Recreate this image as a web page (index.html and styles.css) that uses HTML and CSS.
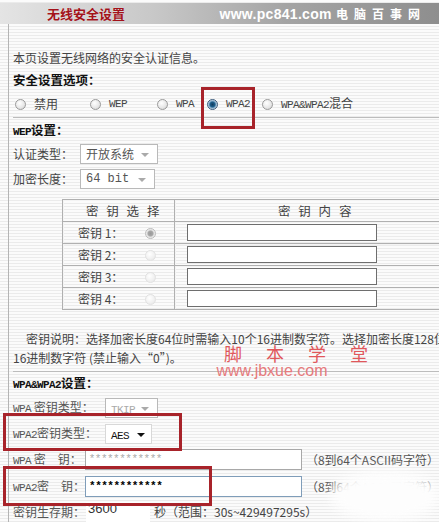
FILE: index.html
```html
<!DOCTYPE html>
<html lang="zh-CN">
<head>
<meta charset="utf-8">
<title>无线安全设置</title>
<link rel="stylesheet" href="styles.css">
</head>
<body>
<div class="page">
  <div class="header">
    <span class="title">无线安全设置</span>
    <span class="site">www.pc841.com <span class="cn">电脑百事网</span></span>
  </div>
  <div class="main">
    <div class="row intro">本页设置无线网络的安全认证信息。</div>
    <div class="row bold opt-title">安全设置选项：</div>
    <div class="row radios">
      <span class="opt w1"><i class="radio"></i><span class="lbl">禁用</span></span>
      <span class="opt w2"><i class="radio"></i><span class="lbl lat">WEP</span></span>
      <span class="opt w3"><i class="radio"></i><span class="lbl lat">WPA</span></span>
      <span class="opt w4"><i class="radio on"></i><span class="lbl lat">WPA2</span></span>
      <span class="opt"><i class="radio"></i><span class="lbl"><span class="lat">WPA&amp;WPA2</span>混合</span></span>
    </div>
    <div class="sep"></div>
    <div class="row bold sec"><span class="lat">WEP</span>设置：</div>
    <div class="row field f1"><span class="flabel">认证类型：</span><span class="select s1">开放系统<i class="arrow"></i></span></div>
    <div class="row field f2"><span class="flabel">加密长度：</span><span class="select s2">64 bit<i class="arrow"></i></span></div>
    <table class="keys">
      <colgroup><col class="k1"><col class="k2"></colgroup>
      <tr class="khead"><td class="c1">密 钥 选 择</td><td class="c2">密 钥 内 容</td></tr>
      <tr><td class="c1"><span class="kl">密钥 1：</span><i class="radio dis sel"></i></td><td class="c2"><span class="kinput"></span></td></tr>
      <tr><td class="c1"><span class="kl">密钥 2：</span><i class="radio dis"></i></td><td class="c2"><span class="kinput"></span></td></tr>
      <tr><td class="c1"><span class="kl">密钥 3：</span><i class="radio dis"></i></td><td class="c2"><span class="kinput"></span></td></tr>
      <tr><td class="c1"><span class="kl">密钥 4：</span><i class="radio dis"></i></td><td class="c2"><span class="kinput"></span></td></tr>
    </table>
    <div class="desc">
      <div class="d1">密钥说明：选择加密长度64位时需输入10个16进制数字符。选择加密长度128位时需输入26个</div>
      <div class="d2">16进制数字符 (禁止输入“0”)。</div>
    </div>
    <div class="sep sep2"></div>
    <div class="row bold sec2"><span class="lat">WPA&amp;WPA2</span>设置：</div>
    <div class="row wf r1"><span class="wl"><span class="lat">WPA</span> 密钥类型：</span><span class="select s3 dim"><span class="lat">TKIP</span><i class="arrow"></i></span></div>
    <div class="row wf r2"><span class="wl"><span class="lat">WPA2</span>密钥类型：</span><span class="select s4"><span class="lat">AES</span><i class="arrow dark"></i></span></div>
    <div class="row wf r3"><span class="wl2"><span class="lat">WPA</span> 密　钥：</span><span class="pw dim">************</span><span class="hint">（8到64个ASCII码字符）</span></div>
    <div class="row wf r4"><span class="wl2"><span class="lat">WPA2</span>密　钥：</span><span class="pw act">************</span><span class="hint">（8到64个ASCII码字符）</span></div>
    <div class="row wf r5"><span class="wl2">密钥生存期：</span><span class="life">3600</span><span class="unit">秒（范围：30s~429497295s）</span></div>
  </div>
  <div class="mark box1"></div>
  <div class="mark box2"></div>
  <div class="mark box3"></div>
  <div class="watermark"><div class="wm1">脚 本 学 堂</div><div class="wm2">www.jbxue.com</div></div>
  <div class="blob"></div>
</div>
</body>
</html>
```
FILE: styles.css
```css
html, body {
  margin: 0;
  padding: 0;
  overflow: hidden;
}
body {
  width: 439px;
  height: 522px;
  font-family: "Noto Sans CJK SC", "Liberation Sans", sans-serif;
  font-size: 12px;
  color: #333;
  background: repeating-linear-gradient(to bottom, #fbfbfb 0, #fbfbfb 2px, #ebebeb 2px, #ebebeb 3px);
}
.page {
  position: relative;
  width: 439px;
  height: 522px;
  overflow: hidden;
}
.lat {
  font-family: "Liberation Mono", "DejaVu Sans Mono", monospace;
  font-size: 11px;
  letter-spacing: -0.6px;
}
.header {
  margin-top: 3px;
  height: 21px;
  background: linear-gradient(to right, #e4e4e4 0%, #c8c8c8 35%, #a4a4a4 65%, #8e8e8e 100%);
  display: flex;
  align-items: center;
  white-space: nowrap;
}
.title {
  margin-left: 47px;
  font-size: 13px;
  font-weight: bold;
  color: #a3121a;
  text-shadow: 0 0 1px rgba(255,255,255,0.6);
}
.site {
  margin-left: auto;
  margin-right: 19px;
  color: #fff;
  font-family: "Liberation Sans", "DejaVu Sans", sans-serif;
  font-weight: bold;
  font-size: 14px;
  letter-spacing: 0.3px;
  white-space: nowrap;
}
.site .cn {
  font-family: "Noto Sans CJK SC", sans-serif;
  font-size: 12px;
  letter-spacing: 6px;
  margin-right: -6px;
}
.main {
  margin-left: 8px;
  border-left: 1px solid #b4b4b4;
  padding-left: 4px;
  padding-top: 24px;
  height: 498px;
  box-sizing: border-box;
}
.row {
  height: 20px;
  line-height: 20px;
  white-space: nowrap;
}
.bold {
  font-weight: bold;
  color: #111;
  font-size: 12.5px;
}
.intro { color: #444; }
.opt-title { margin-top: 2px; }
.radios {
  margin-top: 4px;
  display: flex;
  align-items: center;
  padding-left: 2px;
}
.opt {
  display: flex;
  align-items: center;
}
.opt .lbl { margin-left: 8px; color: #444; }
.w1 { width: 75px; }
.w2 { width: 67px; }
.w3 { width: 50px; }
.w4 { width: 55px; }
.radio {
  display: inline-block;
  width: 11px;
  height: 11px;
  border-radius: 50%;
  box-sizing: border-box;
  border: 1px solid #9a9a9a;
  background: radial-gradient(circle at 40% 35%, #ffffff 0%, #e6e6e6 60%, #c8c8c8 100%);
}
.radio.on {
  border-color: #3b5a7a;
  background: radial-gradient(circle, #123a5c 0, #1d5f8c 2.5px, #7fa8c8 3.5px, #e8eef4 5px);
}
.radio.dis {
  border-color: #e2e2e2;
  background: radial-gradient(circle at 40% 35%, #fff 0, #f0f0f0 60%, #e4e4e4 100%);
}
.radio.dis.sel {
  border-color: #bdbdbd;
  background: radial-gradient(circle, #9a9a9a 0, #a8a8a8 2.5px, #e0e0e0 3.5px, #f6f6f6 5px);
}
.sep {
  height: 1px;
  background: #bcbcbc;
  margin-top: 3px;
}
.sec { margin-top: 2px; }
.field { display: flex; align-items: center; }
.f1 { margin-top: 4px; }
.f2 { margin-top: 5px; }
.flabel { width: 67px; color: #444; }
.select {
  position: relative;
  display: inline-block;
  height: 20px;
  line-height: 18px;
  box-sizing: border-box;
  border: 1px solid #b9b9b9;
  background: #fff;
  padding-left: 5px;
  color: #555;
}
.s1 { width: 78px; }
.s2 { width: 75px; font-family: "Liberation Mono", monospace; font-size: 12px; }
.arrow {
  position: absolute;
  right: 8px;
  top: 8px;
  width: 0;
  height: 0;
  border-left: 4px solid transparent;
  border-right: 4px solid transparent;
  border-top: 4px solid #aaa;
}
.arrow.dark { border-top-color: #111; right: 6px; }
.keys {
  margin-top: 10px;
  margin-left: 49px;
  border-collapse: collapse;
  border: 1px solid #a8a8a8;
  width: 420px;
  table-layout: fixed;
}
.keys col.k1 { width: 112px; }
.keys td {
  border: 1px solid #b0b0b0;
  height: 22px;
  padding: 0;
  box-sizing: border-box;
  box-shadow: inset 1px 1px 0 #f4f4f4;
}
.khead td {
  color: #444;
  font-size: 12.5px;
  letter-spacing: 2.5px;
}
.khead .c1 { padding-left: 23px; }
.khead .c2 { padding-left: 103px; }
.keys .c1 .kl {
  display: inline-block;
  width: 67px;
  margin-left: 15px;
  color: #444;
}
.keys .c1 .radio { vertical-align: -1px; }
.kinput {
  display: block;
  margin-left: 12px;
  width: 190px;
  height: 17px;
  box-sizing: border-box;
  border: 1px solid #6e6e6e;
  background: #fff;
}
.desc {
  margin-top: 19px;
  white-space: nowrap;
  color: #444;
  line-height: 19px;
}
.d1 { padding-left: 13px; }
.sep2 { margin-top: 4px; }
.sec2 { margin-top: 1px; }
.wf { display: flex; align-items: center; }
.wl { width: 92px; color: #555; }
.wl2 { width: 73px; color: #555; }
.r1 { margin-top: 5px; }
.r2 { margin-top: 6px; }
.r3 { margin-top: 5px; height: 21px; }
.r4 { margin-top: 6px; height: 21px; }
.r5 { margin-top: 5px; }
.s3 { width: 53px; }
.s4 { width: 47px; color: #111; border-color: #d8d8d8; }
.dim { color: #aaa; }
.pw {
  width: 221px;
  height: 21px;
  box-sizing: border-box;
  border: 1px solid #a8a8a8;
  background: #fff;
  padding-left: 3px;
  line-height: 19px;
  font-family: "Liberation Mono", monospace;
  font-size: 11px;
  letter-spacing: -0.5px;
}
.pw.act { color: #000; font-weight: bold; border-color: #7f9db9; }
.hint { margin-left: 4px; color: #555; }
.life {
  width: 64px;
  height: 20px;
  box-sizing: border-box;
  background: #fff;
  line-height: 14px;
  padding-left: 2px;
  color: #333;
  font-family: "Liberation Sans", sans-serif;
  font-size: 13px;
}
.unit { margin-left: 4px; color: #444; }
.mark {
  position: absolute;
  border: 3px solid #a8232a;
  box-sizing: border-box;
}
.box1 { left: 201px; top: 87px; width: 54px; height: 42px; }
.box2 { left: 3px; top: 413px; width: 179px; height: 38px; }
.box3 { left: 3px; top: 466px; width: 209px; height: 40px; }
.watermark {
  position: absolute;
  left: 214px;
  top: 343px;
  color: #e0575b;
  white-space: nowrap;
  text-align: center;
  width: 116px;
}
.wm1 { font-size: 18px; letter-spacing: 10px; line-height: 20px; padding-left: 10px; }
.wm2 { font-family: "Liberation Sans", sans-serif; font-size: 16px; line-height: 15px; color: #e67a7c; }
.blob {
  position: absolute;
  left: 330px;
  top: 470px;
  width: 110px;
  height: 52px;
  border-radius: 50%;
  background: #fdfdfd;
  filter: blur(6px);
}
```
